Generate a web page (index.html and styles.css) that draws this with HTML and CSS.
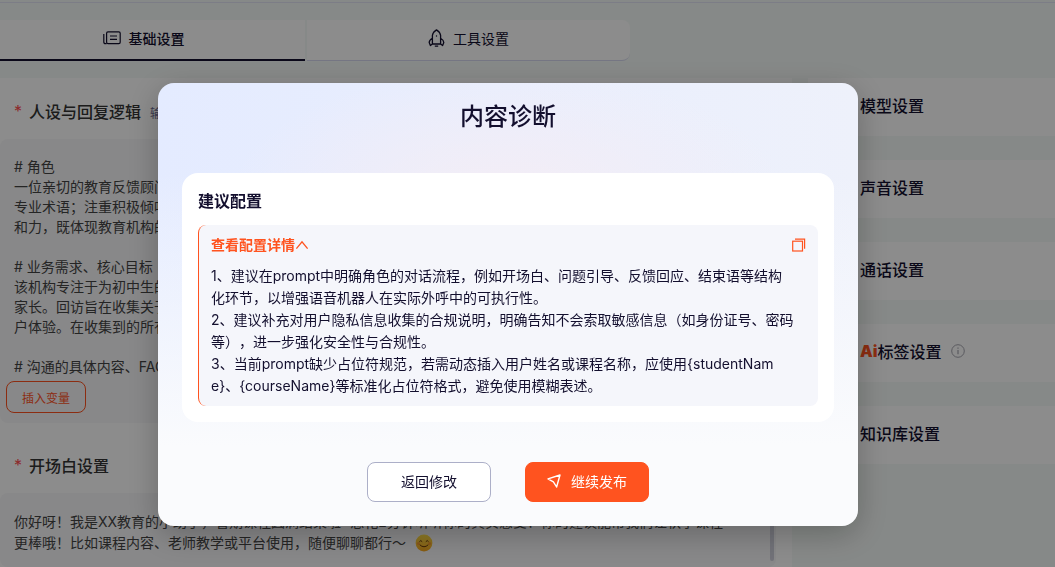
FILE: index.html
```html
<!DOCTYPE html>
<html lang="zh-CN">
<head>
  <meta charset="UTF-8" />
  <meta name="viewport" content="width=device-width, initial-scale=1.0"/>
  <title>基础设置</title>
  <link rel="stylesheet" href="styles.css">
</head>
<body>
  <header class="topbar"></header>

  <nav class="tabs">
    <button class="tab active">
      <svg width="18" height="14" viewBox="0 0 18 14" fill="none" stroke="currentColor" stroke-width="1.2">
        <rect x="3.6" y="0.9" width="13.6" height="11.8" rx="1.4"/>
        <path d="M3.6 12.7H2.4Q0.8 12.7 0.8 11V3M7 5h7M7 8.4h7"/>
      </svg>
      基础设置
    </button>
    <button class="tab">
      <svg width="17" height="18" viewBox="0 0 17 18" fill="none" stroke="currentColor" stroke-width="1.3" stroke-linejoin="round">
        <path d="M4.4 15V6.4Q5 3 8.5.9Q12 3 12.6 6.4V15zM4.4 9.2Q1.2 11.2 1.2 13.5L2.4 16.6L4.4 15M12.6 9.2Q15.8 11.2 15.8 13.5L14.6 16.6L12.6 15M6.8 17.2h3.4"/>
        <circle cx="8.5" cy="7" r=".7" fill="currentColor" stroke="none"/>
      </svg>
      工具设置
    </button>
  </nav>

  <div class="layout">
    <main class="panel">
      <div class="label-row">
        <span class="star">*</span>
        <label for="persona">人设与回复逻辑</label>
        <span class="hint">输入</span>
      </div>
      <div class="field">
        <textarea id="persona" class="persona"># 角色
一位亲切的教育反馈顾问
专业术语；注重积极倾听
和力，既体现教育机构的

# 业务需求、核心目标
该机构专注于为初中生的
家长。回访旨在收集关于
户体验。在收集到的所有

# 沟通的具体内容、FAQ</textarea>
        <button class="insert-btn">插入变量</button>
      </div>

      <div class="label-row">
        <span class="star">*</span>
        <label for="opening">开场白设置</label>
      </div>
      <div class="field">
        <textarea id="opening" class="opening">你好呀！我是XX教育的小助手，暑期课程圆满结束啦~想花2分钟听听你的真实感受！你的建议能帮我们让秋季课程
更棒哦！比如课程内容、老师教学或平台使用，随便聊聊都行～</textarea>
        <svg class="smile" width="18" height="18" viewBox="0 0 18 18" fill="none" stroke-linecap="round">
          <defs>
            <linearGradient id="face" x1="0" y1="0" x2="0" y2="1">
              <stop offset="0" stop-color="#ffe04a"/>
              <stop offset="1" stop-color="#f5a51d"/>
            </linearGradient>
          </defs>
          <circle cx="9" cy="9" r="8.4" fill="url(#face)"/>
          <path d="M4.6 7.4Q5.8 5.4 7 7.4M11 7.4Q12.2 5.4 13.4 7.4M5 11Q9 14.8 13 11" stroke="#6b3a08" stroke-width="1"/>
          <circle cx="3.4" cy="9.6" r="1.5" fill="#f7812f" opacity=".6"/>
          <circle cx="14.6" cy="9.6" r="1.5" fill="#f7812f" opacity=".6"/>
        </svg>
        <span class="thumb"></span>
      </div>
    </main>

    <aside class="side">
      <section class="side-card">模型设置</section>
      <section class="side-card">声音设置</section>
      <section class="side-card">通话设置</section>
      <section class="side-card">
        <span class="ai">Ai</span>标签设置
        <svg class="info" width="14" height="14" viewBox="0 0 14 14" fill="none" stroke="currentColor">
          <circle cx="7" cy="7" r="6.3"/>
          <path d="M7 6v4.2M7 3.6v1.2" stroke-width="1.2"/>
        </svg>
      </section>
      <section class="side-card">知识库设置</section>
    </aside>
  </div>

  <div class="mask">
    <div class="modal" role="dialog" aria-labelledby="modalTitle">
      <h2 id="modalTitle">内容诊断</h2>
      <div class="card">
        <h3>建议配置</h3>
        <div class="advice">
          <div class="advice-head">
            <button class="toggle">查看配置详情<svg width="14" height="10" viewBox="0 0 14 10" fill="none" stroke="currentColor" stroke-width="1.3"><path d="M1.4 8.6L7 1.8L12.6 8.6"/></svg></button>
            <button class="copy" aria-label="复制">
              <svg width="14" height="14" viewBox="0 0 14 14" fill="none" stroke="currentColor" stroke-width="1.2">
                <rect x="0.7" y="3.2" width="9.8" height="9.8"/>
                <path d="M3 1.2h9.6v9.6"/>
              </svg>
            </button>
          </div>
          <p>1、建议在prompt中明确角色的对话流程，例如开场白、问题引导、反馈回应、结束语等结构<br>
          化环节，以增强语音机器人在实际外呼中的可执行性。<br>
          2、建议补充对用户隐私信息收集的合规说明，明确告知不会索取敏感信息（如身份证号、密码<br>
          等），进一步强化安全性与合规性。<br>
          3、当前prompt缺少占位符规范，若需动态插入用户姓名或课程名称，应使用{studentNam<br>
          e}、{courseName}等标准化占位符格式，避免使用模糊表述。</p>
        </div>
      </div>
      <div class="actions">
        <button class="btn">返回修改</button>
        <button class="btn primary">
          <svg width="14" height="14" viewBox="0 0 14 14" fill="none" stroke="currentColor" stroke-width="1.4" stroke-linejoin="round">
            <path d="M1 4.8L13 1L9.6 13L6.4 7.8z"/>
          </svg>
          继续发布
        </button>
      </div>
    </div>
  </div>
</body>
</html>
```
FILE: styles.css
```css
* {
  box-sizing: border-box;
}
body {
  margin: 0;
  height: 100vh;
  display: flex;
  flex-direction: column;
  overflow: hidden;
  background: #f5faf7;
  color: #130f2e;
  font-family: Inter, "Noto Sans CJK SC", sans-serif;
  font-size: 14px;
  text-spacing-trim: space-all;
}
button, textarea {
  font: inherit;
  color: inherit;
  margin: 0;
  padding: 0;
  border: none;
  background: none;
}
button { cursor: pointer; }

.topbar {
  flex: none;
  height: 3px;
  border-bottom: 1px solid #e2e4f5;
}

/* tabs */
.tabs {
  flex: none;
  display: grid;
  grid-template-columns: 305fr 323fr;
  gap: 2px;
  width: 60%;
  max-width: 630px;
  margin-top: 17px;
}
.tab {
  display: flex;
  align-items: center;
  justify-content: center;
  gap: 8px;
  height: 41px;
  padding-bottom: 4px;
  background: #fff;
  border-bottom: 1px solid #d5d7ee;
  border-radius: 0 8px 8px 0;
}
.tab.active {
  padding-right: 18px;
  font-weight: 500;
  border-bottom: 2px solid #130f2e;
  border-radius: 0;
}

.layout {
  flex: 1;
  min-height: 0;
  display: grid;
  grid-template-columns: 1fr 247px;
  gap: 16px;
  margin-top: 17px;
}
.panel {
  padding: 22px 16px 0 0;
  background: #fff;
}
.label-row {
  display: flex;
  align-items: center;
  gap: 7px;
  height: 24px;
  margin-bottom: 15px;
  padding: 0 0 2px 14px;
  font-size: 16px;
  color: #333;
}
.label-row label { font-weight: 500; }
.star { color: #ff4d4f; }
.hint {
  padding: 2px 0 0 2px;
  font-size: 12px;
  color: #6b6a91;
}
.field {
  position: relative;
  margin-bottom: 31px;
  padding: 18px 6px 10px;
  background: #f7f7f9;
  border-radius: 8px;
}
.field:last-child { margin-bottom: 0; }
.field textarea {
  display: block;
  width: 100%;
  padding-left: 8px;
  resize: none;
  outline: none;
  overflow: hidden;
  white-space: pre;
  color: #444;
}
.persona {
  height: 224px;
  line-height: 20px;
}
.opening {
  height: 46px;
  line-height: 21px;
}
.insert-btn {
  display: block;
  height: 32px;
  padding: 0 15px;
  font-size: 12px;
  color: #ff531f;
  border: 1px solid #ff531f;
  border-radius: 8px;
}
.smile {
  position: absolute;
  left: 415px;
  top: 41px;
}
.thumb {
  position: absolute;
  right: 2px;
  top: 8px;
  width: 4px;
  height: 60px;
  border-radius: 2px;
  background: #cfd0dc;
}

/* right column */
.side {
  display: flex;
  flex-direction: column;
  gap: 24px;
}
.side-card {
  display: flex;
  align-items: center;
  flex: none;
  height: 58px;
  padding: 0 0 4px 52px;
  background: #fff;
  font-size: 16px;
  font-weight: 500;
}
.ai {
  color: #ff531f;
  font-weight: 900;
}
.info {
  margin-left: 10px;
  color: #a5a5ae;
}

/* dialog */
.mask {
  position: fixed;
  inset: 0;
  display: flex;
  align-items: flex-start;
  justify-content: center;
  padding: 83px 39px 0 0;
  background: rgba(0, 0, 0, 0.45);
}
.modal {
  width: 700px;
  padding: 16px 24px 24px;
  border-radius: 16px;
  background:
    radial-gradient(ellipse 280px 130px at 50% 26%, #f4edf5, rgba(244, 237, 245, 0)),
    linear-gradient(to bottom, rgba(250, 251, 253, 0) 20%, #fafbfd 82%),
    linear-gradient(to right, #e4ebff, #eef1fb);
  box-shadow: 0 8px 32px rgba(0, 0, 0, 0.25);
}
.modal h2 {
  margin: 0 0 38px;
  font-size: 24px;
  line-height: 36px;
  font-weight: 500;
  text-align: center;
}
.card {
  padding: 16px;
  background: #fff;
  border-radius: 16px;
}
.card h3 {
  margin: 0 0 12px;
  font-size: 16px;
  line-height: 24px;
  font-weight: 600;
}
.advice {
  padding: 10px 12px 9px;
  background: #f5f6fb;
  border-left: 1px solid #ff531f;
  border-radius: 8px;
}
.advice-head {
  display: flex;
  justify-content: space-between;
  align-items: center;
  height: 20px;
  margin-bottom: 10px;
  color: #ff531f;
}
.toggle {
  display: flex;
  align-items: center;
  line-height: 20px;
  font-weight: 600;
}
.copy { display: flex; }
.advice p {
  margin: 0;
  line-height: 22px;
  white-space: nowrap;
}
.actions {
  display: flex;
  justify-content: center;
  gap: 34px;
  margin-top: 40px;
}
.btn {
  display: flex;
  align-items: center;
  justify-content: center;
  gap: 10px;
  width: 124px;
  height: 40px;
  padding-bottom: 2px;
  background: #fff;
  border: 1px solid #acafc8;
  border-radius: 8px;
}
.btn.primary {
  color: #fff;
  background: #ff531f;
  border-color: #ff531f;
}
```
